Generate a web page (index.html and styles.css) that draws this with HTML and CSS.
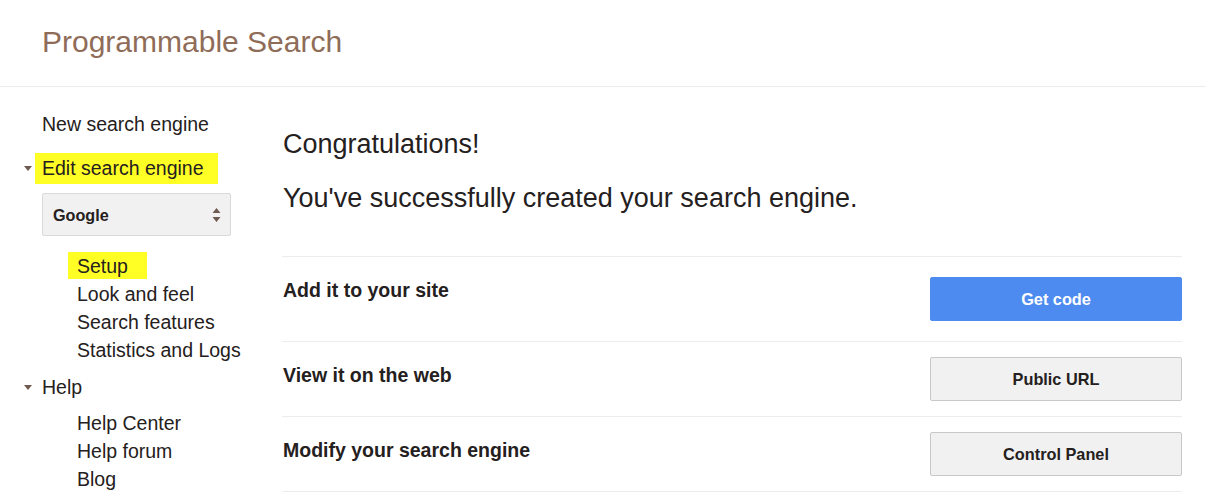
FILE: index.html
```html
<!DOCTYPE html>
<html>
<head>
<meta charset="utf-8">
<link rel="stylesheet" href="styles.css">
</head>
<body>
<header class="topbar">
  <h1 class="brand">Programmable Search</h1>
</header>
<div class="layout">
  <nav class="sidebar">
    <div class="nav-item">New search engine</div>
    <div class="nav-group">
      <div class="nav-toggle"><span class="tri"></span><span class="hl hl-edit">Edit search engine</span></div>
      <div class="select">
        <span class="select-label">Google</span>
        <svg class="select-arrows" width="9" height="16" viewBox="0 0 9 16"><path d="M4.5 1 L8.5 6 L0.5 6 Z M0.5 10 L8.5 10 L4.5 15 Z" fill="#6e5a50"/></svg>
      </div>
      <ul class="sub">
        <li><span class="hl hl-setup">Setup</span></li>
        <li>Look and feel</li>
        <li>Search features</li>
        <li>Statistics and Logs</li>
      </ul>
    </div>
    <div class="nav-group help-group">
      <div class="nav-toggle"><span class="tri"></span><span>Help</span></div>
      <ul class="sub">
        <li>Help Center</li>
        <li>Help forum</li>
        <li>Blog</li>
      </ul>
    </div>
  </nav>
  <main class="content">
    <h2 class="congrats">Congratulations!</h2>
    <p class="lead">You've successfully created your search engine.</p>
    <div class="rows">
      <div class="row first">
        <div class="row-title">Add it to your site</div>
        <button class="btn btn-primary">Get code</button>
      </div>
      <div class="row">
        <div class="row-title">View it on the web</div>
        <button class="btn">Public URL</button>
      </div>
      <div class="row">
        <div class="row-title">Modify your search engine</div>
        <button class="btn">Control Panel</button>
      </div>
    </div>
  </main>
</div>
</body>
</html>
```
FILE: styles.css
```css
* { box-sizing: border-box; }
html, body { margin: 0; padding: 0; background: #fff; }
body {
  font-family: "Liberation Sans", Arial, sans-serif;
  color: #252020;
  width: 1206px;
  height: 496px;
  overflow: hidden;
}
.topbar {
  height: 87px;
  border-bottom: 1px solid #ececec;
  padding: 25px 0 0 42px;
}
.brand {
  margin: 0;
  font-weight: normal;
  font-size: 30px;
  line-height: 34px;
  color: #8f6c58;
}
.layout {
  display: grid;
  grid-template-columns: 282px 900px;
}
.sidebar {
  padding: 23px 0 0 42px;
  font-size: 19.5px;
  line-height: 28px;
}
.nav-item { height: 28px; }
.nav-group { margin-top: 16px; }
.nav-toggle {
  display: flex;
  align-items: center;
  margin-left: -19px;
  height: 28px;
}
.tri {
  width: 19px;
  display: inline-block;
  position: relative;
  height: 28px;
}
.tri::before {
  content: "";
  position: absolute;
  left: 1px;
  top: 12px;
  border-left: 4px solid transparent;
  border-right: 4px solid transparent;
  border-top: 5px solid #6e5a50;
}
.hl { background: #ffff26; }
.hl-edit {
  margin-left: -7px;
  padding: 1px 14px 2px 7px;
  line-height: 28px;
}
.select {
  margin-top: 11px;
  width: 189px;
  height: 43px;
  background: #f1f1f1;
  border: 1px solid #dadada;
  border-radius: 2px;
  display: flex;
  align-items: center;
  justify-content: space-between;
  padding: 0 9px 0 10px;
}
.select-label { font-size: 16.2px; font-weight: bold; }
.sub {
  list-style: none;
  margin: 16px 0 0 0;
  padding: 0 0 0 35px;
}
.sub li { height: 28px; }
.hl-setup {
  margin-left: -9px;
  padding: 0 19px 0 9px;
  display: inline-block;
  height: 27px;
}
.help-group { margin-top: 9px; }
.help-group .sub { margin-top: 8px; }
.content { padding-top: 41px; }
.congrats {
  margin: 0;
  padding-left: 1px;
  font-weight: normal;
  font-size: 27px;
  line-height: 32px;
}
.lead {
  margin: 22px 0 0 0;
  padding-left: 1px;
  font-size: 27px;
  line-height: 32px;
}
.rows {
  margin-top: 42px;
  border-top: 1px solid #ececec;
}
.row {
  display: flex;
  justify-content: space-between;
  align-items: flex-start;
  border-bottom: 1px solid #ececec;
  padding: 15px 0 15px 0;
}
.row.first { padding: 20px 0 20px 0; }
.row-title {
  padding-left: 1px;
  font-size: 19.5px;
  font-weight: bold;
  line-height: 22px;
  margin-top: 7px;
}
.row.first .row-title { margin-top: 2px; }
.btn {
  width: 252px;
  height: 44px;
  font-family: inherit;
  font-size: 16.3px;
  font-weight: bold;
  color: #252020;
  background: #f1f1f1;
  border: 1px solid #c8c8c8;
  border-radius: 2px;
  padding: 0;
}
.btn-primary {
  background: #4d8bf0;
  border-color: #4d8bf0;
  color: #fff;
}
```
